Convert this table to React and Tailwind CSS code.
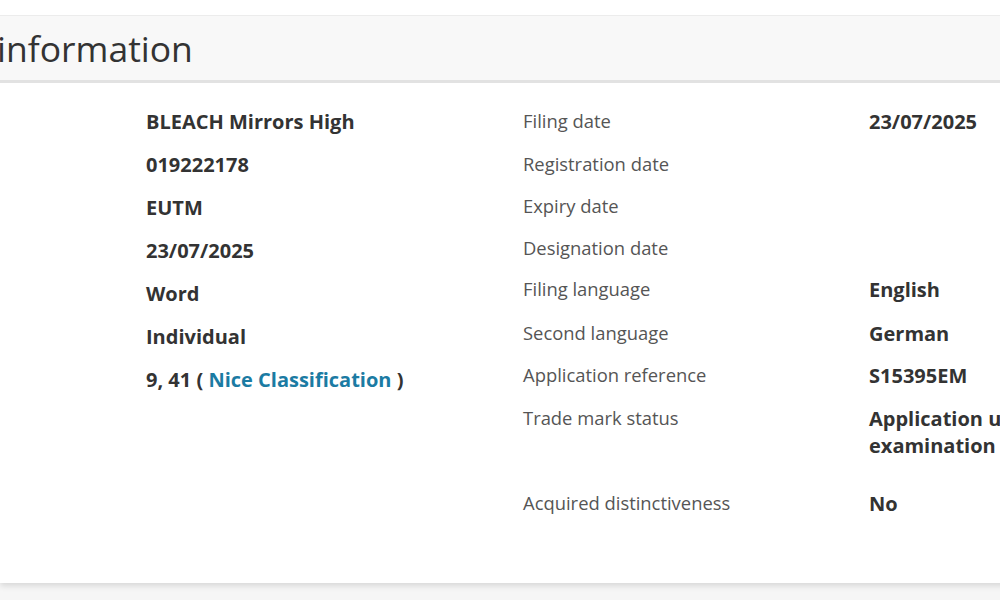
import React from "react";

const leftValues = [
  "BLEACH Mirrors High",
  "019222178",
  "EUTM",
  "23/07/2025",
  "Word",
  "Individual",
];

const rightRows = [
  { label: "Filing date", value: "23/07/2025", h: "h-[43px]" },
  { label: "Registration date", value: "", h: "h-[42px]" },
  { label: "Expiry date", value: "", h: "h-[42px]" },
  { label: "Designation date", value: "", h: "h-[41px]" },
  { label: "Filing language", value: "English", h: "h-[44px]" },
  { label: "Second language", value: "German", h: "h-[42px]" },
  { label: "Application reference", value: "S15395EM", h: "h-[43px]" },
  { label: "Trade mark status", value: "Application under examination", h: "h-[85px]" },
  { label: "Acquired distinctiveness", value: "No", h: "h-[43px]" },
];

export default function App() {
  return (
    <div
      className="w-[1000px] h-[600px] overflow-hidden bg-[#f6f6f6]"
      style={{ fontFamily: '"Open Sans", "Liberation Sans", sans-serif' }}
    >
      <div className="w-[1120px] bg-white shadow-[0_3px_6px_rgba(0,0,0,0.12)]">
        <div className="h-[16px] bg-white border-b border-[#ececec]" />
        <div className="h-[67px] bg-[#f8f8f8] border-b-[3px] border-[#e2e2e2] flex items-center">
          <h2 className="text-[35.5px] leading-none text-[#333] ml-[-3px] pt-[2px]">information</h2>
        </div>
        <div className="h-[500px] flex pt-[24px] box-border">
          <div className="w-[146px] shrink-0" />
          <div className="w-[377px] shrink-0 flex flex-col text-[20px] font-bold text-[#333] leading-[27px] mt-[1px]">
            {leftValues.map((v) => (
              <div key={v} className="h-[43px] shrink-0">{v}</div>
            ))}
            <div className="h-[43px] shrink-0">
              9, 41 ( <span className="text-[#1b7ba3]">Nice Classification</span> )
            </div>
          </div>
          <div className="flex flex-col">
            {rightRows.map((r) => (
              <div key={r.label} className={`flex shrink-0 ${r.h}`}>
                <div className="w-[346px] shrink-0 text-[18.4px] leading-[27px] text-[#555]">{r.label}</div>
                <div className="w-[220px] text-[20px] font-bold leading-[27px] text-[#333] pt-[1px]">{r.value}</div>
              </div>
            ))}
          </div>
        </div>
      </div>
    </div>
  );
}
